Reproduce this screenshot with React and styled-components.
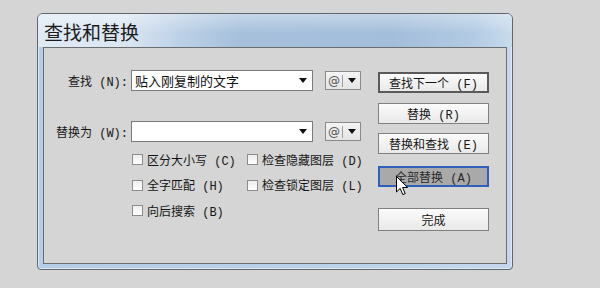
import React from "react";
import styled, { createGlobalStyle } from "styled-components";

const Global = createGlobalStyle`
  html, body { margin: 0; padding: 0; background: #d5d5d5; }
  body { font-family: "Noto Sans CJK SC", "Liberation Sans", sans-serif; }
  #root { width: 600px; height: 288px; overflow: hidden; }
`;

const Page = styled.div`
  width: 600px;
  height: 288px;
  padding: 13px 0 0 37px;
  box-sizing: border-box;
  background: #d5d5d5;
`;

const Window = styled.div`
  width: 476px;
  height: 257px;
  box-sizing: border-box;
  border: 1px solid #5f666e;
  border-radius: 6px 6px 4px 4px;
  background: linear-gradient(to right, #b4cce4 0%, #b9d0e8 50%, #c3d8ee 100%);
  box-shadow: inset 0 1px 0 #e9f1f9, inset 1px 0 0 #dce8f4, inset -1px 0 0 #dce8f4, inset 0 -1px 0 #dce8f4;
  display: flex;
  flex-direction: column;
  padding: 0 5px 5px 5px;
`;

const TitleBar = styled.div`
  height: 33px;
  margin: 0 -5px;
  padding-left: 6px;
  display: flex;
  align-items: center;
  border-radius: 5px 5px 0 0;
  background:
    linear-gradient(to bottom, rgba(255,255,255,0.35) 0%, rgba(255,255,255,0) 60%),
    linear-gradient(to right, #dfe9f4 0%, #dbe6f2 18%, #bcd1e7 30%, #a6c0dc 42%, #a3bedb 75%, #b2cae3 92%, #c8dbee 100%);
`;

const Title = styled.div`
  font-size: 19px;
  color: #1b1b1b;
  line-height: 1;
  margin-top: 1px;
`;

const Panel = styled.div`
  flex: 1;
  border: 1px solid #6d6d6d;
  background: #d5d5d5;
  display: flex;
  font-family: "Liberation Mono", "Noto Sans CJK SC", monospace;
  font-size: 12px;
  color: #151515;
`;

const LeftSection = styled.div`
  width: 334px;
  padding-top: 22px;
  display: flex;
  flex-direction: column;
`;

const FieldRow = styled.div`
  display: flex;
  align-items: center;
  height: 21px;
  margin-top: ${(p) => p.$mt || 0}px;
`;

const Label = styled.div`
  width: 84px;
  text-align: right;
  margin-right: 3px;
  white-space: nowrap;
`;

const Combo = styled.div`
  width: 182px;
  height: 21px;
  box-sizing: border-box;
  border: 1px solid #7b7b7b;
  background: #fff;
  display: flex;
  align-items: center;
  padding-left: 3px;
  font-family: "Noto Sans CJK SC", sans-serif;
  font-size: 13px;
  color: #111;
`;

const ComboText = styled.div`
  flex: 1;
  white-space: nowrap;
  overflow: hidden;
`;

const ArrowSlot = styled.div`
  width: 18px;
  display: flex;
  justify-content: center;
  align-items: center;
`;

const AtBox = styled.div`
  margin-left: 12px;
  width: 36px;
  height: 19px;
  box-sizing: border-box;
  border: 1px solid #8a8a8a;
  background: linear-gradient(#f4f4f4, #e4e4e4);
  display: flex;
  align-items: center;
`;

const AtSign = styled.span`
  width: 17px;
  text-align: center;
  font-family: "DejaVu Sans", sans-serif;
  font-size: 12px;
  color: #555;
  line-height: 1;
`;

const Sep = styled.span`
  width: 1px;
  height: 12px;
  background: #a0a0a0;
`;

const Checks = styled.div`
  margin: 5px 0 0 88px;
  display: grid;
  grid-template-columns: 115px 125px;
  grid-auto-rows: 25.5px;
`;

const CheckItem = styled.label`
  display: flex;
  align-items: center;
  white-space: nowrap;
`;

const Box = styled.span`
  width: 11px;
  height: 11px;
  box-sizing: border-box;
  border: 1px solid #8c8c8c;
  background: linear-gradient(#eeeeee, #ffffff);
  margin-right: 4px;
  flex: none;
`;

const RightColumn = styled.div`
  width: 111px;
  padding-top: 24px;
  display: flex;
  flex-direction: column;
`;

const Button = styled.div`
  position: relative;
  height: ${(p) => p.$h || 21}px;
  margin-top: ${(p) => p.$mt || 0}px;
  box-sizing: border-box;
  border: ${(p) => (p.$default ? "2px solid #5a5a5a" : p.$focus ? "2px solid #2f5fb8" : "1px solid #808080")};
  background: ${(p) => (p.$focus ? "#a9a9a9" : "linear-gradient(#fbfbfb, #e9e9e9)")};
  display: flex;
  align-items: center;
  justify-content: center;
  font-size: 12px;
  color: ${(p) => (p.$focus ? "#2a2a2a" : "#151515")};
  white-space: nowrap;
`;

const Cursor = styled.svg`
  position: absolute;
  left: 16px;
  top: 8px;
`;

const Tri = () => (
  <svg width="8" height="5" viewBox="0 0 8 5">
    <path d="M0 0 H8 L4 5 Z" fill="#111" />
  </svg>
);

const ComboField = ({ text }) => (
  <Combo>
    <ComboText>{text}</ComboText>
    <ArrowSlot>
      <Tri />
    </ArrowSlot>
  </Combo>
);

const AtMenu = () => (
  <AtBox>
    <AtSign>@</AtSign>
    <Sep />
    <ArrowSlot>
      <Tri />
    </ArrowSlot>
  </AtBox>
);

const checks = [
  "区分大小写 (C)",
  "检查隐藏图层 (D)",
  "全字匹配 (H)",
  "检查锁定图层 (L)",
  "向后搜索 (B)",
];

export default function App() {
  return (
    <Page>
      <Global />
      <Window>
        <TitleBar>
          <Title>查找和替换</Title>
        </TitleBar>
        <Panel>
          <LeftSection>
            <FieldRow>
              <Label>查找 (N):</Label>
              <ComboField text="贴入刚复制的文字" />
              <AtMenu />
            </FieldRow>
            <FieldRow $mt={30}>
              <Label>替换为 (W):</Label>
              <ComboField text="" />
              <AtMenu />
            </FieldRow>
            <Checks>
              {checks.map((c) => (
                <CheckItem key={c}>
                  <Box />
                  {c}
                </CheckItem>
              ))}
            </Checks>
          </LeftSection>
          <RightColumn>
            <Button $default>查找下一个 (F)</Button>
            <Button $mt={10}>替换 (R)</Button>
            <Button $mt={9}>替换和查找 (E)</Button>
            <Button $mt={12} $focus>
              全部替换 (A)
              <Cursor width="13" height="20" viewBox="0 0 13 20">
                <path
                  d="M0.5 0.5 L0.5 16 L4.2 12.4 L6.8 18.6 L9.2 17.6 L6.6 11.5 L11.6 11.5 Z"
                  fill="#fff"
                  stroke="#000"
                  strokeWidth="1"
                  strokeLinejoin="miter"
                />
              </Cursor>
            </Button>
            <Button $mt={21} $h={23}>完成</Button>
          </RightColumn>
        </Panel>
      </Window>
    </Page>
  );
}
